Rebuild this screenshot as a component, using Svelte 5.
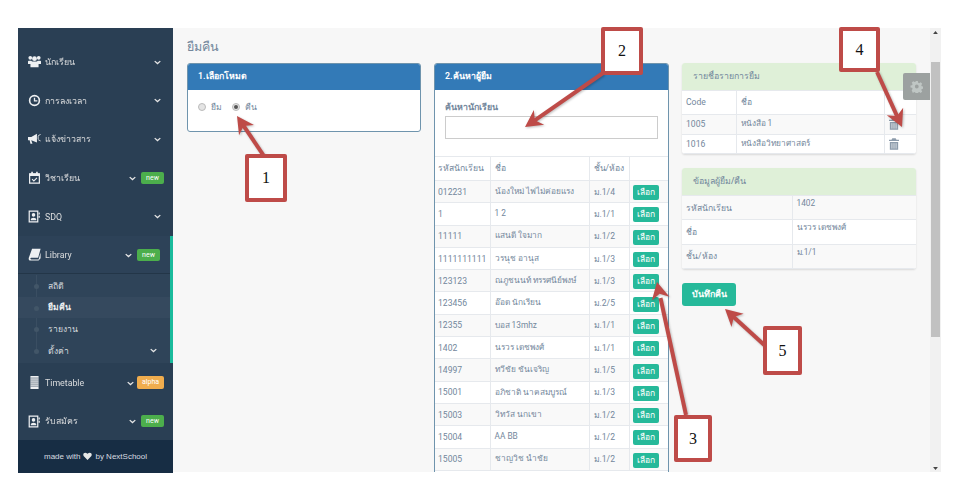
<script>
  const students = [
    ['012231', 'น้องใหม่ ไฟไม่ค่อยแรง', 'ม.1/4'],
    ['1', '1 2', 'ม.1/1'],
    ['11111', 'แสนดี ใจมาก', 'ม.1/2'],
    ['1111111111', 'วรนุช อานุส', 'ม.1/3'],
    ['123123', 'ณภูชนนท์ ทรรศนีย์พงษ์', 'ม.1/3'],
    ['123456', 'อ๊อด นักเรียน', 'ม.2/5'],
    ['12355', 'บอส 13mhz', 'ม.1/1'],
    ['1402', 'นรวร เดชพงศ์', 'ม.1/1'],
    ['14997', 'ทวีชัย ชันเจริญ', 'ม.1/5'],
    ['15001', 'อภิชาติ นาคสมบูรณ์', 'ม.1/3'],
    ['15003', 'วิทวัส นกเขา', 'ม.1/2'],
    ['15004', 'AA BB', 'ม.1/2'],
    ['15005', 'ชาญวิช นำชัย', 'ม.1/2']
  ];
  const borrowed = [['1005', 'หนังสือ 1'], ['1016', 'หนังสือวิทยาศาสตร์']];
  const info = [['รหัสนักเรียน', '1402'], ['ชื่อ', 'นรวร เดชพงศ์'], ['ชั้น/ห้อง', 'ม.1/1']];
  const navTop = [
    { label: 'นักเรียน', icon: 'users' },
    { label: 'การลงเวลา', icon: 'clock' },
    { label: 'แจ้งข่าวสาร', icon: 'horn' },
    { label: 'วิชาเรียน', icon: 'cal', badge: 'new' },
    { label: 'SDQ', icon: 'card' }
  ];
  const navBottom = [
    { label: 'Timetable', icon: 'table', badge: 'alpha' },
    { label: 'รับสมัคร', icon: 'card', badge: 'new' }
  ];
  const sub = ['สถิติ', 'ยืมคืน', 'รายงาน', 'ตั้งค่า'];
  const callouts = [
    { n: 1, cls: 'c1' }, { n: 2, cls: 'c2' }, { n: 3, cls: 'c3' }, { n: 4, cls: 'c4' }, { n: 5, cls: 'c5' }
  ];
  const arrows = [
    [270, 165, 237, 116], [603, 73, 525, 127], [686, 415, 657, 282], [877, 72, 902, 127], [772, 352, 725, 309]
  ];
  function head(a) {
    const [x1, y1, x2, y2] = a;
    const d = Math.hypot(x2 - x1, y2 - y1), ux = (x2 - x1) / d, uy = (y2 - y1) / d;
    const bx = x2 - ux * 17, by = y2 - uy * 17, nx = -uy * 9, ny = ux * 9;
    const mx = x2 - ux * 12, my = y2 - uy * 12;
    return `${x2},${y2} ${bx + nx},${by + ny} ${mx},${my} ${bx - nx},${by - ny}`;
  }
</script>

{#snippet icon(name)}
  <svg class="ico" viewBox="0 0 16 16" aria-hidden="true">
    {#if name === 'users'}
      <circle cx="8" cy="4.500" r="3" /><circle cx="2.800" cy="3.400" r="2.300" /><circle cx="13.200" cy="3.400" r="2.300" />
      <path d="M1 7h3l1 1h6l1-1h3a1 1 0 0 1 1 1v3h-3v4H3v-4H0V8a1 1 0 0 1 1-1z" />
    {:else if name === 'clock'}
      <circle cx="8" cy="8" r="6" fill="none" stroke="currentColor" stroke-width="2" />
      <path d="M8 4.500V8.500H11.500" fill="none" stroke="currentColor" stroke-width="1.600" />
    {:else if name === 'horn'}
      <path d="M0 6h4l7-4v11L4 10l1.500 4.500H3L2 10H0z" /><path d="M12.500 4.500l3-1.500M15.500 11l-3-1.500M12.500 5v4" stroke="currentColor" fill="none" />
    {:else if name === 'cal'}
      <path d="M2 3.500h12V15H2z" fill="none" stroke="currentColor" stroke-width="1.500" />
      <path d="M2 3h12v3H2zM4 1h2v3H4zM10 1h2v3h-2z" />
      <path d="M5 10l2.200 2.200L11 8.500" fill="none" stroke="currentColor" stroke-width="1.300" />
    {:else if name === 'card'}
      <path d="M1.500 1.500h10.500v13H1.500z" fill="none" stroke="currentColor" stroke-width="1.500" />
      <circle cx="6.800" cy="6" r="2.200" /><path d="M3.300 12.500c0-4 7-4 7 0z" /><path d="M13 3h1.500v2.500H13zM13 7h1.500v2.500H13z" />
    {:else if name === 'book'}
      <path d="M5 1H15.500L12.500 12H4C2.500 12 2.500 14 4 14H13L15.500 5.500V12.500L13 15.500H3C.8 15.500 .6 13.500 1 12z" />
    {:else if name === 'table'}
      <path d="M3 0h10v16H3z" /><path d="M3 2.500h10M3 5h10M3 7.500h10M3 10h10M3 12.500h10" stroke="#2a3f54" stroke-width=".7" fill="none" />
    {/if}
  </svg>
{/snippet}

{#snippet chevron()}
  <svg class="chev" viewBox="0 0 10 6" aria-hidden="true"><path d="M1 1l4 3.500L9 1" /></svg>
{/snippet}

{#snippet navItem(item)}
  <div class="nav-item">
    {@render icon(item.icon)}
    <span class="nav-label">{item.label}</span>
    {@render chevron()}
    {#if item.badge}<span class="badge {item.badge}">{item.badge}</span>{/if}
  </div>
{/snippet}

<div class="page">
  <aside class="sidebar">
    <nav class="nav">
      {#each navTop as item}{@render navItem(item)}{/each}
      <div class="active-group">
        {@render navItem({ label: 'Library', icon: 'book', badge: 'new' })}
        <ul class="submenu">
          {#each sub as s, i}
            <li class:current={i === 1}>
              <i class="dot"></i><span>{s}</span>
              {#if i === 3}{@render chevron()}{/if}
            </li>
          {/each}
        </ul>
      </div>
      {#each navBottom as item}{@render navItem(item)}{/each}
    </nav>
    <footer class="made">made with <svg class="heart" viewBox="0 0 16 14" aria-hidden="true"><path d="M8 14L1.500 7.500C-1.500 4 2.500-1.500 8 3c5.500-4.500 9.500 1 6.500 4.500z" /></svg> by NextSchool</footer>
  </aside>

  <main class="content">
    <h1>ยืมคืน</h1>
    <div class="cols">
      <section class="panel blue mode">
        <header>1.เลือกโหมด</header>
        <div class="radios">
          <label><i class="radio"></i>ยืม</label>
          <label><i class="radio on"></i>คืน</label>
        </div>
      </section>

      <section class="panel blue search">
        <header>2.ค้นหาผู้ยืม</header>
        <div class="search-body">
          <label for="q">ค้นหานักเรียน</label>
          <input id="q" type="text" />
        </div>
        <table class="students">
          <thead><tr><th>รหัสนักเรียน</th><th>ชื่อ</th><th>ชั้น/ห้อง</th><th></th></tr></thead>
          <tbody>
            {#each students as s}
              <tr><td>{s[0]}</td><td>{s[1]}</td><td>{s[2]}</td><td class="act"><span class="pick">เลือก</span></td></tr>
            {/each}
          </tbody>
        </table>
      </section>

      <div class="right">
        <section class="panel green">
          <header>รายชื่อรายการยืม</header>
          <table class="borrow">
            <thead><tr><th>Code</th><th>ชื่อ</th><th></th></tr></thead>
            <tbody>
              {#each borrowed as b}
                <tr>
                  <td>{b[0]}</td><td>{b[1]}</td>
                  <td class="trash">
                    <svg viewBox="0 0 12 14" aria-hidden="true"><path d="M4 0h4l1 2h3v1.500H0V2h3zM1 4.500h10V14H1z" fill="currentColor" /><path d="M3.500 6v6.500M6 6v6.500M8.500 6v6.500" stroke="#fff" stroke-width=".8" /></svg>
                  </td>
                </tr>
              {/each}
            </tbody>
          </table>
        </section>
        <section class="panel green">
          <header>ข้อมูลผู้ยืม/คืน</header>
          <table class="info">
            <tbody>
              {#each info as r}<tr><th>{r[0]}</th><td>{r[1]}</td></tr>{/each}
            </tbody>
          </table>
        </section>
        <button class="save">บันทึกคืน</button>
      </div>
    </div>
    <div class="gear">
      <svg viewBox="0 0 24 24" aria-hidden="true"><path d="M10 2h4l.6 3 2 .9 2.600-1.700 2.800 2.800-1.700 2.600.9 2 3 .6v3.600l-3 .6-.9 2 1.700 2.600-2.800 2.800-2.600-1.700-2 .9-.6 3h-4l-.6-3-2-.9-2.600 1.700L2.600 19l1.700-2.600-.9-2-3-.6v-3.600l3-.6.9-2L2.600 5l2.800-2.800L8 3.900l2-.9zM12 8.500a3.500 3.500 0 1 0 0 7 3.500 3.500 0 0 0 0-7z" transform="translate(.5 0)" fill-rule="evenodd" /></svg>
    </div>
  </main>

  <div class="scrollbar">
    <svg class="sa" viewBox="0 0 8 5" aria-hidden="true"><path d="M4 0l4 5H0z" /></svg>
    <div class="thumb"></div>
    <svg class="sa" viewBox="0 0 8 5" aria-hidden="true"><path d="M0 0h8L4 5z" /></svg>
  </div>

  <svg class="arrows" viewBox="0 0 958 482" aria-hidden="true">
    {#each arrows as a}
      <line x1={a[0]} y1={a[1]} x2={a[0] + (a[2] - a[0]) * 0.88} y2={a[1] + (a[3] - a[1]) * 0.88} />
      <polygon points={head(a)} />
    {/each}
  </svg>
  {#each callouts as c}<div class="callout {c.cls}">{c.n}</div>{/each}
</div>

<style>
  :global(body) { margin: 0; background: #fff; overflow: hidden; }
  .page {
    position: relative; width: 958px; height: 482px; box-sizing: border-box;
    padding: 28px 17px 10px 18px; display: flex;
    font: 8.600px/1.4 Roboto, "Noto Sans", "Liberation Sans", sans-serif; color: #73879c;
  }
  .sidebar { width: 155px; flex: none; background: #2a3f54; color: #e7e7e7; display: flex; flex-direction: column; }
  .nav { padding-top: 14px; flex: 1; }
  .nav-item { height: 38.6px; box-sizing: border-box; display: flex; align-items: center; padding: 2px 10px 0 10px; font-size: 8.800px; }
  .ico { width: 13px; height: 13px; fill: currentColor; flex: none; color: #eef0f2; margin-top: -1px; }
  .nav-label { margin-left: 4px; flex: 1; opacity: .92; }
  .chev { width: 7px; height: 5px; fill: none; stroke: #e7e7e7; stroke-width: 1.800; flex: none; margin-left: 4px; }
  .nav-item .chev { margin-right: 2px; }
  .badge { box-sizing: border-box; font-size: 7px; line-height: 12px; border-radius: 2px; color: #fff; margin-left: 3px; margin-right: -1px; height: 12px; width: 23px; text-align: center; margin-top: -1px; }
  .badge.new { background: #4cae4c; }
  .badge.alpha { background: #f0ad4e; width: 27px; height: 13px; margin-left: 1px; }
  .active-group { border-right: 3px solid #1abb9c; margin-top: 1px; background: #2f4459; }
  .active-group .nav-item { height: 37px; background: #2d4258; box-shadow: 0 1px 0 #233648; padding-right: 11px; }
  .submenu { list-style: none; margin: 0; padding: 2px 0 1px; position: relative; }
  .submenu::before { content: ''; position: absolute; left: 18px; top: 2px; bottom: 10px; width: 1px; background: #3a4e62; }
  .submenu li { height: 21.7px; display: flex; align-items: center; padding: 0 13px 0 30px; position: relative; font-size: 8.600px; color: #d5dade; }
  .submenu li span { flex: 1; }
  .submenu li.current { background: #35495e; font-weight: 600; color: #eceff1; }
  .dot { position: absolute; left: 16px; top: 9px; width: 5px; height: 5px; border-radius: 50%; background: #425668; }
  .made { height: 33px; flex: none; background: #172d44; color: #d8dce0; display: flex; align-items: center; justify-content: center; font: 8px "Liberation Sans", sans-serif; gap: 3px; }
  .heart { width: 9px; height: 8px; fill: #e7e7e7; }

  .content { flex: 1; min-width: 0; background: #f7f7f7; padding: 0 0 0 14px; overflow: hidden; position: relative; }
  h1 { margin: 0; height: 35px; padding-top: 9px; box-sizing: border-box; font-size: 12.500px; font-weight: 400; line-height: 20px; color: #73879c; }
  .cols { display: grid; grid-template-columns: 234px 235px 234px; column-gap: 13px; align-items: start; }
  .panel { background: #fff; border-radius: 3px; overflow: hidden; box-sizing: border-box; }
  .panel header { height: 27px; display: flex; align-items: center; padding-left: 10px; font-size: 8.800px; font-weight: 600; }
  .blue { border: 1px solid #6f94ad; }
  .blue header { background: #337ab7; color: #fff; margin: -1px -1px 0; padding-left: 11px; height: 27px; }
  .mode { height: 69px; }
  .radios { display: flex; gap: 10px; padding: 11px 0 0 10px; }
  .radios label { display: flex; align-items: center; gap: 5px; font-size: 8.600px; }
  .radio { border-radius: 50%; background: #e4e4e4; border: 1px solid #bbb; position: relative; box-sizing: content-box; width: 6px; height: 6px; }
  .radio.on::after { content: ''; position: absolute; left: 1px; top: 1px; width: 4px; height: 4px; border-radius: 50%; background: #555; }

  .search { height: 500px; }
  .search-body { padding: 11px 10px 17px 10px; }
  .search-body label { display: block; font-size: 8.800px; font-weight: 600; line-height: 12px; margin-bottom: 3px; }
  .search-body input { display: block; width: 100%; height: 23px; box-sizing: border-box; border: 1px solid #ccc; background: #fff; margin: 0; padding: 0; }

  table { border-collapse: collapse; table-layout: fixed; width: 100%; }
  th, td { border: 1px solid #e6e9ed; padding: 0 0 0 4px; text-align: left; font-weight: 400; white-space: nowrap; overflow: hidden; font-size: 8.600px; box-sizing: border-box; }
  table tr > :first-child { border-left: 0; }
  table tr > :last-child { border-right: 0; }
  .students th:nth-child(1), .students td:nth-child(1) { width: 55px; padding-left: 3px; }
  .students th:nth-child(2) { width: 99px; }
  .students th:nth-child(3) { width: 40px; }
  .students td:nth-child(2) { padding-left: 4px; font-size: 8.300px; }
  .students thead tr { height: 24px; }
  .students tbody tr { height: 22.300px; }
  .students tbody tr:nth-child(odd), .borrow tbody tr:nth-child(odd), .info tr:nth-child(odd) { background: #f9f9f9; }
  .act { padding-left: 3px; }
  .pick { display: block; width: 26px; height: 15px; line-height: 14px; margin-top: 2px; text-align: center; border-radius: 2px; background: #26b99a; color: #fff; font-size: 8.500px; }

  .right { display: flex; flex-direction: column; gap: 14px; align-items: flex-start; }
  .green { width: 100%; box-shadow: 0 1px 2px rgba(0, 0, 0, .12); }
  .green header { background: #dff0d8; padding-left: 11px; font-weight: 500; }
  .borrow th:nth-child(1) { width: 54px; }
  .borrow th:nth-child(2) { width: 148px; }
  .borrow td:nth-child(2) { font-size: 8.300px; }
  .borrow thead tr { height: 24px; }
  .borrow tbody tr { height: 19.500px; }
  .trash { color: #8c9bab; }
  .trash svg { display: block; width: 10px; height: 12px; }
  .info th { width: 110px; }
  .info td { vertical-align: top; padding-top: 2px; font-size: 8.300px; }
  .info tr { height: 24.300px; }
  .save { margin: 0; width: 54px; height: 23px; background: #26b99a; color: #fff; border: 0; border-radius: 3px; padding: 0; font: 600 8.800px Roboto, sans-serif; }

  .gear { position: absolute; right: 0; top: 45px; width: 27px; height: 27px; background: #9ca1a0; display: flex; align-items: center; justify-content: center; border-radius: 2px 0 0 2px; }
  .gear svg { width: 13px; height: 13px; fill: #bfc6c4; }

  .scrollbar { width: 11px; flex: none; background: #f1f1f1; display: flex; flex-direction: column; align-items: center; justify-content: space-between; padding: 2px 0; box-sizing: border-box; }
  .sa { width: 5px; height: 3px; fill: #444; flex: none; }
  .thumb { width: 9px; height: 275px; background: #c1c1c1; margin-top: 28px; margin-bottom: auto; }
  .sa:first-child { margin-top: 1px; }

  .arrows { position: absolute; inset: 0; width: 958px; height: 482px; pointer-events: none; filter: drop-shadow(1px 1px 1px rgba(0,0,0,.25)); }
  .arrows line { stroke: #be4b48; stroke-width: 4; }
  .arrows polygon { fill: #be4b48; }
  .callout { position: absolute; box-sizing: border-box; border: 4px solid #be4b48; border-radius: 2px; background: #fff; color: #111; display: flex; align-items: center; justify-content: center; font: 16px "Liberation Serif", serif; }
  .c1 { left: 245px; top: 154px; width: 42px; height: 48px; }
  .c2 { left: 601px; top: 27px; width: 42px; height: 48px; }
  .c3 { left: 674px; top: 415px; width: 38px; height: 47px; }
  .c4 { left: 839px; top: 27px; width: 41px; height: 45px; }
  .c5 { left: 763px; top: 326px; width: 39px; height: 49px; }
</style>
